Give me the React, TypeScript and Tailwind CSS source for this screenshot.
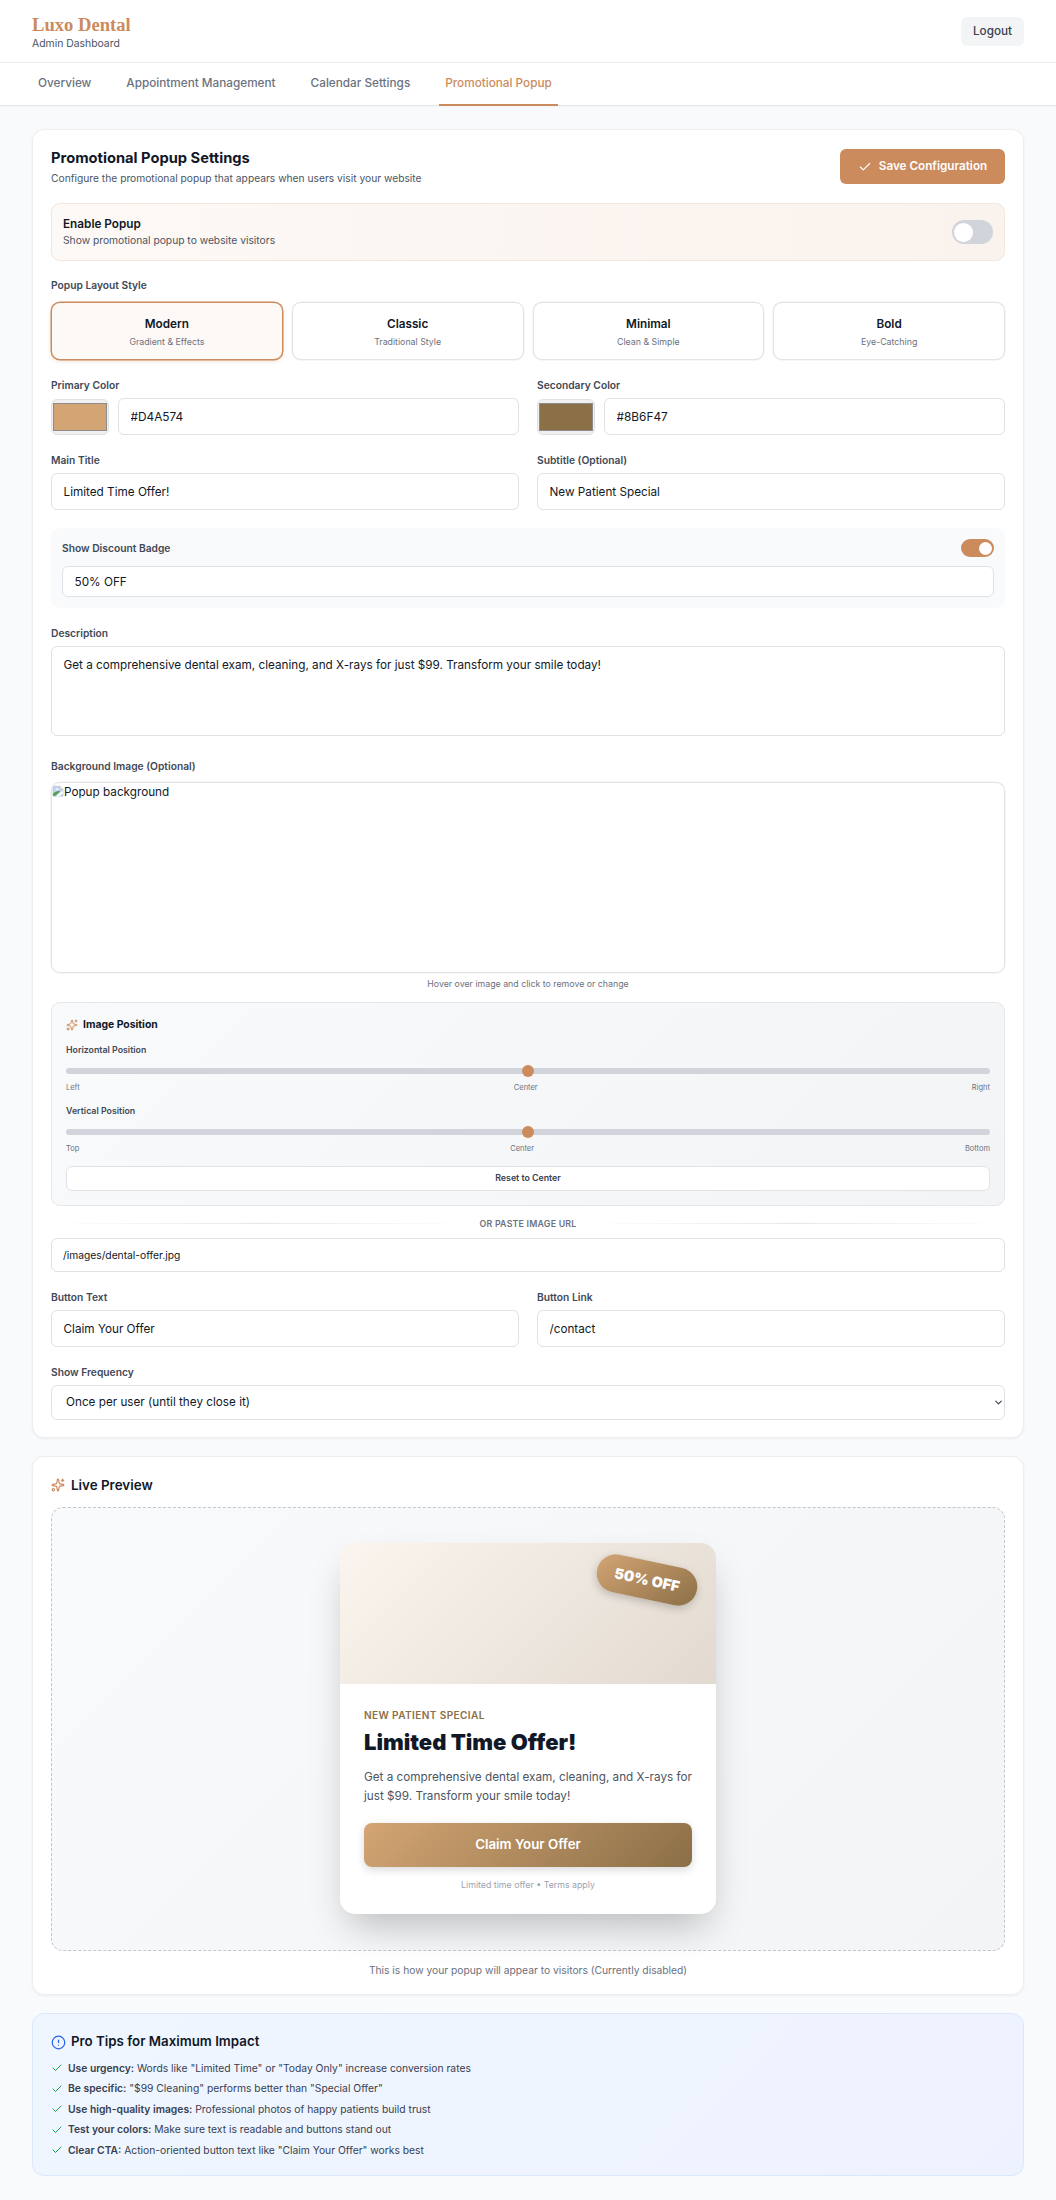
import React from "react";
import { AlertCircle, Check, ChevronDown, Sparkles } from "lucide-react";

const tabs = [
  { name: "Overview", active: false },
  { name: "Appointment Management", active: false },
  { name: "Calendar Settings", active: false },
  { name: "Promotional Popup", active: true },
];

const layouts = [
  { name: "Modern", note: "Gradient & Effects", active: true },
  { name: "Classic", note: "Traditional Style", active: false },
  { name: "Minimal", note: "Clean & Simple", active: false },
  { name: "Bold", note: "Eye-Catching", active: false },
];

const tips = [
  { lead: "Use urgency:", text: 'Words like "Limited Time" or "Today Only" increase conversion rates' },
  { lead: "Be specific:", text: '"$99 Cleaning" performs better than "Special Offer"' },
  { lead: "Use high-quality images:", text: "Professional photos of happy patients build trust" },
  { lead: "Test your colors:", text: "Make sure text is readable and buttons stand out" },
  { lead: "Clear CTA:", text: 'Action-oriented button text like "Claim Your Offer" works best' },
];

const description =
  "Get a comprehensive dental exam, cleaning, and X-rays for just $99. Transform your smile today!";

function Label({ children }: { children: React.ReactNode }) {
  return <label className="block h-[15px] text-[10.25px] leading-[15px] font-semibold text-[#414956]">{children}</label>;
}

function TextField({ label, value }: { label: string; value: string }) {
  return (
    <div>
      <Label>{label}</Label>
      <input
        readOnly
        value={value}
        className="mt-[5px] block h-[37px] w-full rounded-[6px] border border-[#dfe1e5] bg-white px-[11.5px] text-[11.73px] text-[#111827]"
      />
    </div>
  );
}

function ColorField({ label, value }: { label: string; value: string }) {
  return (
    <div>
      <Label>{label}</Label>
      <div className="mt-[5px] flex items-center gap-[9px]">
        <div className="h-[36px] w-[58px] rounded-[6px] border border-[#dfe1e5] bg-[#f0f0f2] px-px py-[3px]">
          <div className="h-full w-full border border-[#8b8b8b]" style={{ backgroundColor: value }} />
        </div>
        <input
          readOnly
          value={value}
          className="block h-[37px] min-w-0 flex-1 rounded-[6px] border border-[#dfe1e5] bg-white px-[11.5px] text-[11.85px] text-[#111827]"
        />
      </div>
    </div>
  );
}

function PositionSlider({ label, marks }: { label: string; marks: string[] }) {
  return (
    <div>
      <div className="h-[14px] text-[8.8px] leading-[14px] font-semibold text-[#414956]">{label}</div>
      <div className="mt-[11px] flex h-[6px] items-center justify-center rounded-full bg-[#d1d5db]">
        <div className="h-[12px] w-[12px] shrink-0 rounded-full bg-[#cc8b5c]" />
      </div>
      <div className="mt-[8px] flex h-[12px] justify-between text-[7.5px] leading-[12px] text-[#6b7280]">
        {marks.map((m) => (
          <span key={m}>{m}</span>
        ))}
      </div>
    </div>
  );
}

function BrokenImage() {
  return (
    <svg width="12" height="12.5" viewBox="0 0 16 16" className="mt-[2px] shrink-0">
      <path d="M1.5 1.5h9l4 4v9h-13z" fill="#c3d3f3" stroke="#b4bac6" />
      <path d="M5 6a2 2 0 0 1 4 0z" fill="#fff" />
      <path d="M1.500 14v-3c3-3 7-4 9.500-3l-6.500 6z" fill="#4f9f45" />
      <path d="M5 15 14.500 7v4l-5 4z" fill="#fff" />
      <path d="M10.500 1.500v4h4" fill="#eef1f6" stroke="#b4bac6" />
    </svg>
  );
}

export default function App() {
  return (
    <div className="min-h-[2200px] w-full bg-[#f9fafb] font-['Inter',sans-serif] text-[#111827] antialiased">
      <header className="flex h-[63px] items-start justify-between border-b border-[#e9eaed] bg-white px-8">
        <div className="pt-[14px]">
          <div className="h-[22px] font-['Liberation_Serif',serif] text-[18.6px] leading-[22px] font-bold text-[#cc8b5c]">
            Luxo Dental
          </div>
          <div className="mt-px h-[14px] text-[10.4px] leading-[14px] text-[#4b5563]">Admin Dashboard</div>
        </div>
        <button className="mt-[17px] h-[29px] w-[63px] rounded-[6px] bg-[#f3f4f6] text-[11.7px] font-medium text-[#374151]">
          Logout
        </button>
      </header>

      <nav className="flex h-[43px] gap-[23px] border-b border-[#e5e7eb] bg-white px-8 shadow-[0_1px_2px_rgba(0,0,0,0.03)]">
        {tabs.map((t) => (
          <a
            key={t.name}
            className={
              t.active
                ? "h-[43px] border-b-2 border-[#cc8b5c] px-[6px] text-[11.75px] leading-[40px] font-medium text-[#cc8b5c]"
                : "h-[43px] px-[6px] text-[11.75px] leading-[40px] font-medium text-[#6b7280]"
            }
          >
            {t.name}
          </a>
        ))}
      </nav>

      <main className="px-8 pt-[23px]">
        <section className="h-[1309px] rounded-[12px] border border-[#eceef1] bg-white px-[18px] pt-[19px] shadow-[0_1px_3px_rgba(0,0,0,0.05)]">
          <div className="flex h-[35px] items-start justify-between">
            <div>
              <h2 className="h-[19px] text-[14.7px] leading-[18px] font-bold">Promotional Popup Settings</h2>
              <p className="mt-[3px] text-[10.25px] leading-[15px] text-[#4b5563]">
                Configure the promotional popup that appears when users visit your website
              </p>
            </div>
            <button className="flex h-[35px] w-[165px] items-center justify-center gap-[7px] rounded-[6px] bg-[#cc8b5c] text-[11.7px] font-semibold text-white">
              <Check size={14} strokeWidth={2} />
              Save Configuration
            </button>
          </div>

          <div className="mt-[19px] flex h-[58px] items-center justify-between rounded-[9px] border border-[#f3e6df] bg-[linear-gradient(90deg,#fdf9f6,#faf2ed)] px-[11px]">
            <div>
              <div className="h-[16px] text-[11.75px] leading-[17px] font-semibold">Enable Popup</div>
              <div className="h-[16px] text-[10.28px] leading-[17px] text-[#4b5563]">
                Show promotional popup to website visitors
              </div>
            </div>
            <div className="flex h-[24px] w-[41px] items-center rounded-full bg-[#d1d5db] px-[2px]">
              <div className="h-[19px] w-[19px] rounded-full bg-white" />
            </div>
          </div>

          <div className="mt-[17px]">
            <Label>Popup Layout Style</Label>
            <div className="mt-[9px] grid grid-cols-4 gap-[9px]">
              {layouts.map((l) => (
                <div
                  key={l.name}
                  className={
                    l.active
                      ? "flex h-[58px] flex-col items-center rounded-[9px] border border-[#cc8b5c] bg-[#fdf9f6] pt-[12px] shadow-[0_2px_4px_rgba(205,139,95,0.2),0_0_0_0.5px_#cc8b5c]"
                      : "flex h-[58px] flex-col items-center rounded-[9px] border border-[#e2e4e8] bg-white pt-[12px] shadow-[0_0_0_0.5px_#eceef1]"
                  }
                >
                  <div className="h-[17px] text-[11.75px] leading-[18px] font-semibold">{l.name}</div>
                  <div className="mt-[3px] h-[13px] text-[8.8px] leading-[13px] text-[#6b7280]">{l.note}</div>
                </div>
              ))}
            </div>
          </div>

          <div className="mt-[18px] grid grid-cols-2 gap-[18px]">
            <ColorField label="Primary Color" value="#D4A574" />
            <ColorField label="Secondary Color" value="#8B6F47" />
            <TextField label="Main Title" value="Limited Time Offer!" />
            <TextField label="Subtitle (Optional)" value="New Patient Special" />
          </div>

          <div className="mt-[18px] h-[80px] rounded-[9px] bg-[#f9fafb] px-[11px] pt-[11px]">
            <div className="flex h-[18px] items-center justify-between">
              <Label>Show Discount Badge</Label>
              <div className="flex h-[18px] w-[33px] items-center justify-end rounded-full bg-[#cc8b5c] px-[2px]">
                <div className="h-[13px] w-[13px] rounded-full bg-white" />
              </div>
            </div>
            <input
              readOnly
              value="50% OFF"
              className="mt-[9px] block h-[31px] w-full rounded-[6px] border border-[#dfe2e6] bg-white px-[11.5px] text-[11.75px] text-[#111827]"
            />
          </div>

          <div className="mt-[18px]">
            <Label>Description</Label>
            <textarea
              readOnly
              value={description}
              className="mt-[5px] block h-[90px] w-full resize-none rounded-[6px] border border-[#dfe1e5] bg-white px-[11.5px] py-[9px] text-[11.73px] leading-[18px] text-[#111827]"
            />
          </div>

          <div className="mt-[23px]">
            <Label>Background Image (Optional)</Label>
            <div className="mt-[8px] flex h-[191px] items-start overflow-hidden rounded-[9px] border border-[#e2e4e8] text-[11.73px] leading-[19px] shadow-[0_0_0_0.5px_#eceef1]">
              <BrokenImage />
              <span>Popup background</span>
            </div>
            <p className="mt-[4px] h-[15px] text-center text-[8.8px] leading-[14px] text-[#6b7280]">
              Hover over image and click to remove or change
            </p>
          </div>

          <div className="mt-[10px] h-[204px] rounded-[9px] border border-[#e5e7eb] bg-[linear-gradient(135deg,#f9fafb,#f3f4f6)] px-[14px] pt-[14px]">
            <div className="flex h-[15px] items-center gap-[5px] text-[10.4px] font-bold">
              <Sparkles size={12} className="text-[#cc8b5c]" />
              Image Position
            </div>
            <div className="mt-[11px] flex flex-col gap-[10px]">
              <PositionSlider label="Horizontal Position" marks={["Left", "Center", "Right"]} />
              <PositionSlider label="Vertical Position" marks={["Top", "Center", "Bottom"]} />
            </div>
            <button className="mt-[11px] block h-[25px] w-full rounded-[6px] border border-[#dfe2e6] bg-white pb-px text-[8.8px] font-semibold text-[#374151]">
              Reset to Center
            </button>
          </div>

          <div className="mt-[10px] flex h-[15px] items-center gap-[12px] text-[8.8px] font-semibold tracking-[0.22px] text-[#6b7280]">
            <div className="h-px flex-1 bg-gradient-to-r from-transparent via-[#e5e7eb] to-transparent" />
            OR PASTE IMAGE URL
            <div className="h-px flex-1 bg-gradient-to-r from-transparent via-[#e5e7eb] to-transparent" />
          </div>
          <input
            readOnly
            value="/images/dental-offer.jpg"
            className="mt-[7px] block h-[34px] w-full rounded-[6px] border border-[#dfe1e5] bg-white px-[11px] text-[10.28px] text-[#111827]"
          />

          <div className="mt-[18px] grid grid-cols-2 gap-[18px]">
            <TextField label="Button Text" value="Claim Your Offer" />
            <TextField label="Button Link" value="/contact" />
          </div>

          <div className="mt-[18px]">
            <Label>Show Frequency</Label>
            <div className="relative mt-[5px]">
              <select className="block h-[35px] w-full appearance-none rounded-[6px] border border-[#dfe1e5] bg-white px-[14px] text-[11.73px] text-[#111827]">
                <option>Once per user (until they close it)</option>
              </select>
              <ChevronDown size={11} strokeWidth={2.5} className="absolute top-[12px] right-px text-[#374151]" />
            </div>
          </div>
        </section>

        <section className="mt-[18px] h-[539px] rounded-[12px] border border-[#eceef1] bg-white px-[18px] pt-[18px] shadow-[0_1px_3px_rgba(0,0,0,0.05)]">
          <h3 className="flex h-[20px] items-center gap-[6px] text-[13.4px] font-semibold">
            <Sparkles size={14} className="text-[#cc8b5c]" />
            Live Preview
          </h3>
          <div className="mt-[12px] flex h-[444px] justify-center rounded-[12px] border border-dashed border-[#c3c8cf] bg-[linear-gradient(135deg,#f9fafb,#f3f4f6)] pt-[35px]">
            <div className="relative h-[371px] w-[376px] rounded-[15px] bg-white shadow-[0_19px_38px_-9px_rgba(0,0,0,0.25)]">
              <div className="h-[141px] rounded-t-[15px] bg-[linear-gradient(135deg,#fbf5ef,#e2dad0)]" />
              <div className="absolute top-[18px] right-[18px] flex h-[38px] w-[102px] rotate-12 items-center justify-center rounded-full bg-[linear-gradient(135deg,#d4a574,#8b6f47)] text-[14.5px] font-black text-white shadow-[0_3px_9px_rgba(0,0,0,0.2)]">
                50% OFF
              </div>
              <div className="px-[24px] pt-[23px]">
                <div className="h-[16px] text-[10.1px] leading-[17px] font-semibold tracking-[0.375px] whitespace-nowrap text-[#8b6f47]">
                  NEW PATIENT SPECIAL
                </div>
                <div className="mt-[5px] h-[27px] text-[22px] leading-[28px] font-black whitespace-nowrap">
                  Limited Time Offer!
                </div>
                <p className="mt-[13px] h-[38px] text-[11.73px] leading-[19px] whitespace-nowrap text-[#4b5563]">
                  Get a comprehensive dental exam, cleaning, and X-rays for
                  <br />
                  just $99. Transform your smile today!
                </p>
                <button className="mt-[17px] block h-[44px] w-full rounded-[8px] bg-[linear-gradient(135deg,#d4a574,#8b6f47)] text-[13.3px] font-semibold text-white shadow-[0_3px_9px_rgba(0,0,0,0.15)]">
                  Claim Your Offer
                </button>
                <p className="mt-[11px] text-center text-[8.8px] leading-[14px] text-[#9ca3af]">
                  Limited time offer • Terms apply
                </p>
              </div>
            </div>
          </div>
          <p className="mt-[12px] h-[15px] text-center text-[10.27px] leading-[15px] text-[#6b7280]">
            This is how your popup will appear to visitors (Currently disabled)
          </p>
        </section>

        <section className="mt-[18px] h-[163px] rounded-[12px] border border-[#dbe8fb] bg-[linear-gradient(135deg,#eff6ff,#eef2ff)] px-[18px] pt-[18px]">
          <h3 className="flex h-[20px] items-center gap-[5px] text-[13.3px] font-semibold">
            <AlertCircle size={15} className="text-[#2563eb]" />
            Pro Tips for Maximum Impact
          </h3>
          <ul className="mt-[6px]">
            {tips.map((t) => (
              <li
                key={t.lead}
                className="flex h-[20.5px] items-center gap-[5px] text-[10.3px] whitespace-nowrap text-[#374151]"
              >
                <Check size={12} className="text-[#16a34a]" />
                <span>
                  <strong className="font-semibold">{t.lead}</strong> {t.text}
                </span>
              </li>
            ))}
          </ul>
        </section>
      </main>
    </div>
  );
}
